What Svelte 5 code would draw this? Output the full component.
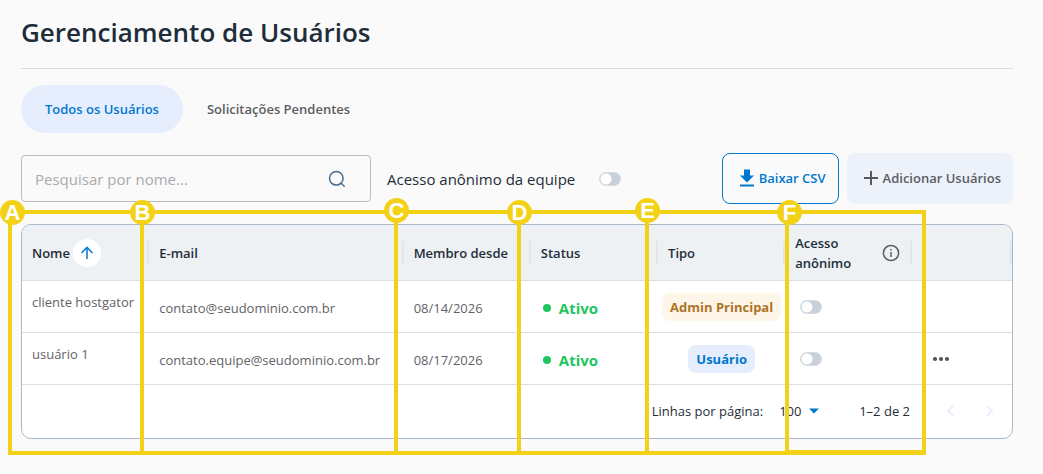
<script>
  let query = $state('');
  let teamAnonymous = $state(false);
  let activeTab = $state('all');
  let pageSize = $state('100');

  const tabs = [
    { id: 'all', label: 'Todos os Usuários' },
    { id: 'pending', label: 'Solicitações Pendentes' },
  ];

  let users = $state([
    { name: 'cliente hostgator', email: 'contato@seudominio.com.br', since: '08/14/2026', status: 'Ativo', type: 'Admin Principal', owner: true, anonymous: false },
    { name: 'usuário 1', email: 'contato.equipe@seudominio.com.br', since: '08/17/2026', status: 'Ativo', type: 'Usuário', owner: false, anonymous: false },
  ]);

  const markers = [
    { letter: 'A', place: 'inset' },
    { letter: 'B', place: '' },
    { letter: 'C', place: 'raised' },
    { letter: 'D', place: '' },
    { letter: 'E', place: 'raised' },
    { letter: 'F', place: 'inset' },
  ];
</script>

<main>
  <h1>Gerenciamento de Usuários</h1>

  <nav class="tabs">
    {#each tabs as tab}
      <button class="tab" class:active={activeTab === tab.id} onclick={() => (activeTab = tab.id)}>{tab.label}</button>
    {/each}
  </nav>

  <div class="toolbar">
    <label class="search">
      <input type="text" placeholder="Pesquisar por nome..." aria-label="Pesquisar por nome" bind:value={query} />
      <svg width="18" height="18" viewBox="0 0 18 18" fill="none" stroke="#4b6c8f" stroke-width="1.5" stroke-linecap="round">
        <circle cx="8.3" cy="8.3" r="6.8" /><path d="M13.2 13.2 16.2 16.2" />
      </svg>
    </label>
    <label class="team">
      <span>Acesso anônimo da equipe</span>
      <input class="switch" type="checkbox" bind:checked={teamAnonymous} />
    </label>
    <div class="actions">
      <button class="btn outline">
        <svg width="14" height="18" viewBox="0 0 14 18" fill="#0078d0">
          <path d="M4 0.5h6v6h4L7 13.5 0 6.5h4zM0 15.5h14v2H0z" />
        </svg>
        Baixar CSV
      </button>
      <button class="btn soft">
        <svg width="14" height="14" viewBox="0 0 14 14" stroke="#55595e" stroke-width="2"><path d="M7 0v14M0 7h14" /></svg>
        Adicionar Usuários
      </button>
    </div>
  </div>

  <section class="stage">
    <div class="card">
      <table>
        <colgroup>
          <col class="std" /><col class="wide" /><col class="std" /><col class="std" /><col class="std" /><col class="std" /><col />
        </colgroup>
        <thead>
          <tr>
            <th><div class="head">Nome
              <button class="sort" aria-label="Ordenar por nome">
                <svg width="14" height="14" viewBox="0 0 14 14" fill="none" stroke="#0b7fd3" stroke-width="1.6"><path d="M7 13V2M1.5 7 7 1.5 12.5 7" /></svg>
              </button></div></th>
            <th><div class="head">E-mail</div></th>
            <th><div class="head">Membro desde</div></th>
            <th><div class="head">Status</div></th>
            <th><div class="head">Tipo</div></th>
            <th><div class="head split"><span>Acesso anônimo</span>
              <svg width="18" height="18" viewBox="0 0 18 18" fill="none" stroke="#5b6066" stroke-width="1.5">
                <circle cx="9" cy="9" r="7.6" /><path d="M9 8v5M9 5v1.6" />
              </svg></div></th>
            <th><div class="head"></div></th>
          </tr>
        </thead>
        <tbody>
          {#each users as user}
            <tr>
              <td class="name">{user.name}</td>
              <td>{user.email}</td>
              <td>{user.since}</td>
              <td><span class="status">{user.status}</span></td>
              <td class="type"><span class="badge" class:owner={user.owner}>{user.type}</span></td>
              <td class="toggle"><input class="switch" type="checkbox" aria-label="Acesso anônimo" bind:checked={user.anonymous} /></td>
              <td class="menu">
                {#if !user.owner}
                  <button class="more" aria-label="Mais opções">
                    <svg width="18" height="6" viewBox="0 0 18 6" fill="#50555b"><circle cx="3" cy="3" r="2.1" /><circle cx="9" cy="3" r="2.1" /><circle cx="15" cy="3" r="2.1" /></svg>
                  </button>
                {/if}
              </td>
            </tr>
          {/each}
        </tbody>
      </table>
      <footer>
        <label for="page-size">Linhas por página:</label>
        <div class="size">
          <select id="page-size" bind:value={pageSize}><option>100</option><option>50</option><option>25</option></select>
          <svg width="10" height="6" viewBox="0 0 10 6" fill="#0078d0"><path d="M0 .5h10L5 5.5z" /></svg>
        </div>
        <span class="range">1–2 de 2</span>
        <button class="page" aria-label="Página anterior" disabled>
          <svg width="8" height="12" viewBox="0 0 8 12" fill="none" stroke="#ececfc" stroke-width="2"><path d="M7 1 2 6l5 5" /></svg>
        </button>
        <button class="page" aria-label="Próxima página" disabled>
          <svg width="8" height="12" viewBox="0 0 8 12" fill="none" stroke="#ececfc" stroke-width="2"><path d="m1 1 5 5-5 5" /></svg>
        </button>
      </footer>
    </div>

    <div class="markers">
      {#each markers as marker}
        <div class="zone"><span class="pin {marker.place}">{marker.letter}</span></div>
      {/each}
    </div>
  </section>
</main>

<style>
  :global(body) { background: #fafafa; }
  :global(*) { box-sizing: border-box; }
  main {
    padding: 13px 30px 20px 21px;
    font-family: "Segoe UI", "Open Sans", "Noto Sans", sans-serif;
    font-size: 13px;
    color: #1f2d3a;
  }
  button, input, select { font: inherit; color: inherit; margin: 0; }
  button { border: 0; background: none; padding: 0; cursor: pointer; }
  svg { display: block; flex: none; }

  h1 {
    margin: 0;
    padding-bottom: 17px;
    border-bottom: 1px solid #dcdcdc;
    font-size: 26px;
    line-height: 38px;
    font-weight: 600;
  }
  .tabs { display: flex; margin-top: 16px; }
  .tab {
    height: 48px;
    padding: 0 24px;
    border-radius: 24px;
    font-weight: 600;
    color: #5a5e62;
  }
  .tab.active { background: #e6eefe; color: #0078d0; }

  .toolbar { display: flex; align-items: center; gap: 16px; margin-top: 20px; }
  .search {
    display: flex;
    align-items: center;
    flex: 0 1 350px;
    height: 47px;
    padding: 0 24px 0 13px;
    border: 1px solid #bdbdbd;
    border-radius: 4px;
  }
  .search input { flex: 1; min-width: 0; padding: 0; border: 0; outline: 0; background: none; font-size: 15px; }
  .search input::placeholder { color: #a9abad; opacity: 1; }
  .team { display: flex; align-items: center; gap: 24px; line-height: 22px; font-size: 15px; white-space: nowrap; }
  .switch {
    appearance: none;
    display: block;
    width: 22px;
    height: 14px;
    border-radius: 7px;
    background: radial-gradient(circle at 7px 7px, #fff 5px, #c8d0da 6px);
    border: 1px solid #d5dbe2;
    background-origin: border-box;
  }
  .switch:checked { background: radial-gradient(circle at 15px 7px, #fff 5px, #0078d0 6px); }
  .actions { display: flex; gap: 8px; margin-left: auto; }
  .btn {
    display: flex;
    align-items: center;
    justify-content: center;
    gap: 5px;
    height: 51px;
    padding: 0 12px 2px 17px;
    border-radius: 8px;
    font-weight: 600;
    white-space: nowrap;
  }
  .outline { border: 1px solid #0078d0; color: #0078d0; }
  .soft { background: #edf1fa; color: #5a5e62; }

  .stage { position: relative; margin-top: 20px; }
  .card { border: 1px solid #a9b8c6; border-radius: 10px; background: #fff; overflow: hidden; }
  table { width: 100%; table-layout: fixed; border-collapse: separate; border-spacing: 0; }
  .std { width: 12.85%; }
  .wide { width: 25.7%; }
  th { height: 56px; padding: 0; background: #edf1f4; border-bottom: 1px solid #dcdfe2; text-align: left; font-weight: 600; }
  .head {
    display: flex;
    align-items: center;
    gap: 3px;
    height: 24px;
    padding-left: 10px;
    border-right: 2px solid #e2e5e9;
    line-height: 20px;
    white-space: nowrap;
  }
  .split { justify-content: space-between; padding-right: 10px; white-space: normal; }
  .split span { width: 60px; }
  .sort { display: grid; place-items: center; flex: none; width: 28px; height: 28px; border-radius: 50%; background: #fff; }
  td { height: 52px; padding: 2px 10px 0; border-bottom: 1px solid #dcdfe2; color: #5f6368; white-space: nowrap; }
  .name { padding: 12px 0 0 10px; vertical-align: top; }
  .status { display: flex; align-items: center; gap: 8px; padding-left: 2px; font-size: 15px; font-weight: 700; color: #22c55e; }
  .status::before { content: ""; width: 8px; height: 8px; border-radius: 50%; background: #22c55e; }
  .type { padding: 0; text-align: center; }
  .badge {
    display: inline-block;
    padding: 0 8px;
    border-radius: 8px;
    line-height: 28px;
    font-weight: 700;
    background: #e6eefe;
    color: #0078d0;
  }
  .badge.owner { background: #fff6ea; color: #ad7426; }
  .toggle { padding: 0 15px; }
  .menu { padding: 0 20px; }
  .more { display: block; }

  footer { display: flex; align-items: center; justify-content: flex-end; height: 53px; padding: 0 12px 2px 0; }
  .size { position: relative; display: flex; align-items: center; margin-left: 16px; }
  .size select { appearance: none; width: 40px; padding: 0; border: 0; outline: 0; background: none; }
  .size svg { position: absolute; right: 0; pointer-events: none; }
  .range { margin: 0 30px 0 40px; }
  .page { display: grid; place-items: center; width: 20px; height: 28px; }
  .page + .page { margin-left: 20px; }

  .markers {
    position: absolute;
    inset: -14px 87px -16px -13px;
    display: grid;
    grid-template-columns: 132fr 254fr 123fr 128fr 140fr 141fr;
    pointer-events: none;
  }
  .zone { position: relative; border: 4px solid #f3d117; border-right: 0; }
  .zone:last-child { border-right: 4px solid #f3d117; border-bottom-width: 5px; }
  .pin {
    position: absolute;
    top: -14px;
    left: -14px;
    width: 25px;
    height: 25px;
    border-radius: 50%;
    background: #f3d117;
    color: #fff;
    font: 700 22px/25px "Liberation Sans", Arial, sans-serif;
    text-align: center;
  }
  .pin.raised { top: -16px; }
  .pin.inset { left: -12px; }
</style>
